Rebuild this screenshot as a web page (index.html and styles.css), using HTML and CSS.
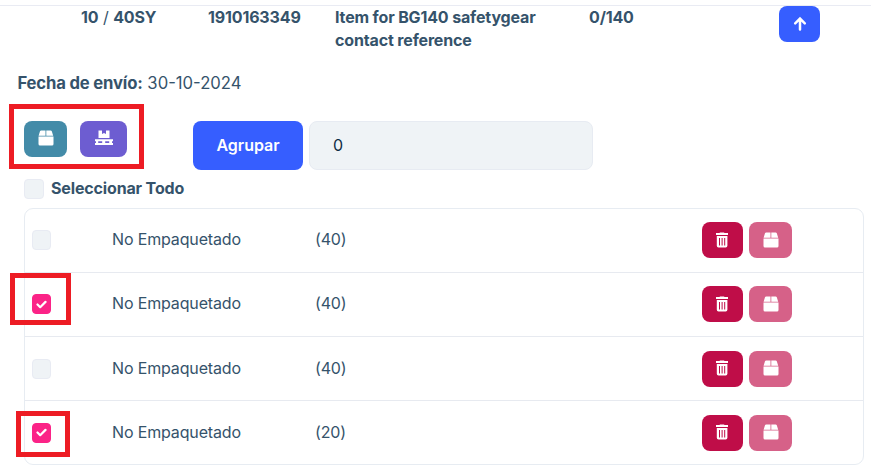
FILE: index.html
```html
<!DOCTYPE html>
<html lang="es">
<head>
<meta charset="utf-8">
<title>Empaquetado</title>
<link rel="stylesheet" href="styles.css">
</head>
<body>
<svg class="defs" width="0" height="0" aria-hidden="true">
  <symbol id="box" viewBox="0 0 16 16"><path d="M3.2.5h4.300v5.200H.6L2 1.300Q2.300.5 3.200.5ZM8.300.5h4.300q.9 0 1.200.8l1.400 4.400H8.300ZM.5 6.500h15v7.500q0 1.500-1.500 1.500H2Q.5 15.500.5 14Z"/></symbol>
  <symbol id="pallet" viewBox="0 0 20 16"><path d="M4.500.5H8v3.500l2-1 2 1V.5h3.500v7.500h-11ZM1 9.300h18v2h-1v1.700h1v2H1v-2h1v-1.700H1Zm3.200 2v1.700h4v-1.700Zm7 0v1.700h4v-1.700Z" fill-rule="evenodd"/></symbol>
  <symbol id="trash" viewBox="0 0 14 16"><path d="M4.500 1 5 .4h4l.5.6H13v2H1V1ZM1.800 4h10.600v9.800q0 1.700-1.700 1.700H3.500q-1.700 0-1.700-1.700ZM4 6v7.500h1V6Zm2.600 0v7.500h1V6Zm2.600 0v7.500h1V6Z" fill-rule="evenodd"/></symbol>
</svg>
<div class="page">
  <header class="item">
    <div><b>10</b> / <b>40SY</b></div>
    <b>1910163349</b>
    <b>Item for BG140 safetygear contact reference</b>
    <b>0/140</b>
    <button class="btn up" aria-label="Subir"><svg width="14" height="15" viewBox="0 0 14 15"><path d="M7 13.500V3M2.200 7.300 7 2.500l4.800 4.800" fill="none" stroke="#fff" stroke-width="2.500" stroke-linecap="round"/></svg></button>
  </header>
  <p class="date"><b>Fecha de envío:</b> 30-10-2024</p>
  <div class="toolbar">
    <div class="pack">
      <button class="btn teal" aria-label="Caja"><svg width="16" height="16"><use href="#box"/></svg></button>
      <button class="btn purple" aria-label="Palet"><svg width="20" height="16"><use href="#pallet"/></svg></button>
      <span class="mark mark-pack"></span>
    </div>
    <button class="btn group">Agrupar</button>
    <input class="qty" value="0" aria-label="Cantidad">
  </div>
  <label class="all"><span class="check large"></span><b>Seleccionar Todo</b></label>
  <div class="list">
    <div class="row upper">
      <div><span class="check"></span></div><span>No Empaquetado</span><span>(40)</span>
      <div class="actions"><button class="btn red" aria-label="Eliminar"><svg width="14" height="16"><use href="#trash"/></svg></button><button class="btn pink" aria-label="Caja"><svg width="16" height="16"><use href="#box"/></svg></button></div>
    </div>
    <div class="row upper">
      <div><span class="check on"><svg width="11" height="9" viewBox="0 0 11 9"><path d="m1.500 4.500 2.700 2.700L9.500 1.900"/></svg></span><span class="mark mark-a"></span></div><span>No Empaquetado</span><span>(40)</span>
      <div class="actions"><button class="btn red" aria-label="Eliminar"><svg width="14" height="16"><use href="#trash"/></svg></button><button class="btn pink" aria-label="Caja"><svg width="16" height="16"><use href="#box"/></svg></button></div>
    </div>
    <div class="row">
      <div><span class="check"></span></div><span>No Empaquetado</span><span>(40)</span>
      <div class="actions"><button class="btn red" aria-label="Eliminar"><svg width="14" height="16"><use href="#trash"/></svg></button><button class="btn pink" aria-label="Caja"><svg width="16" height="16"><use href="#box"/></svg></button></div>
    </div>
    <div class="row">
      <div><span class="check on"><svg width="11" height="9" viewBox="0 0 11 9"><path d="m1.500 4.500 2.700 2.700L9.500 1.900"/></svg></span><span class="mark mark-b"></span></div><span>No Empaquetado</span><span>(20)</span>
      <div class="actions"><button class="btn red" aria-label="Eliminar"><svg width="14" height="16"><use href="#trash"/></svg></button><button class="btn pink" aria-label="Caja"><svg width="16" height="16"><use href="#box"/></svg></button></div>
    </div>
  </div>
</div>
</body>
</html>
```
FILE: styles.css
```css
* { box-sizing: border-box; }
body {
  margin: 0;
  background: #fff;
  color: #35536b;
  font: 16px/23px Inter, sans-serif;
  overflow: hidden;
}
b { font-weight: 650; letter-spacing: -.15px; }
.defs { display: block; }
.page { padding-top: 5px; }
.item {
  display: grid;
  grid-template-columns: 127px 127px 254px 190px 41px;
  align-items: start;
  height: 67px;
  padding-left: 81px;
  border-top: 1px solid #e9ebf3;
}
.item > b:nth-child(3) { padding-right: 40px; }
.date { margin: 0 0 26px; padding-left: 17.4px; font-size: 16.65px; }
.btn {
  display: inline-flex;
  align-items: center;
  justify-content: center;
  height: 36px;
  padding: 0;
  border: 0;
  border-radius: 8px;
  color: #fff;
  fill: #fff;
  font: 600 16px/23px Inter, sans-serif;
}
.btn svg { margin: 0 1px 1px 0; }
.up { width: 41px; background: #365eff; }
.btn.up svg { margin: 0 0 1px; }
.teal { width: 43px; background: #438ba8; }
.btn.teal svg { margin: 0 0 2px; }
.purple { width: 47px; background: #6d5dd1; }
.btn.purple svg { margin: 0 0 2px; }
.red { width: 41px; background: #bf0d48; }
.pink { width: 43px; background: #d66188; }
.btn.pink svg { margin: 0 0 1px; }
.toolbar { display: flex; align-items: flex-start; padding-left: 24px; }
.pack { position: relative; display: flex; gap: 13px; width: 169px; }
.group { width: 110px; height: 49px; margin-right: 6px; background: #365eff; }
.qty {
  width: 284px;
  height: 49px;
  padding: 0 23px 1px;
  border: 1px solid #e7ebf2;
  border-radius: 8px;
  background: #eff3f6;
  color: #0f2e45;
  font: 16px/23px Inter, sans-serif;
}
.all { display: flex; align-items: center; gap: 7px; width: fit-content; margin: 7px 0 8px 24px; }
.check {
  display: flex;
  align-items: center;
  justify-content: center;
  width: 19px;
  height: 20px;
  border: 1px solid #e8ebf3;
  border-radius: 4px;
  background: #eff3f6;
}
.large { width: 20px; height: 20px; }
.on { border-color: #fb2387; background: #fb2387; }
.on path { fill: none; stroke: #fff; stroke-width: 2.2; stroke-linecap: round; stroke-linejoin: round; }
.list { width: 840px; margin-left: 24px; border: 1px solid #e7ecf2; border-radius: 9px; letter-spacing: -.15px; }
.row {
  position: relative;
  display: grid;
  grid-template-columns: 80px 203px 387px 90px;
  align-items: center;
  height: 64px;
  padding-left: 7px;
}
.upper { padding-bottom: 1px; }
.upper > span { padding-bottom: 1px; }
.row:last-child { height: 63px; }
.row:not(:last-child) { border-bottom: 1px solid #e7eaf0; }
.actions { display: flex; gap: 6px; }
.mark { position: absolute; border: 5px solid #ed1c24; pointer-events: none; }
.mark-pack { left: -15px; top: -17px; width: 135px; height: 65px; }
.mark-a { left: -15px; top: 0; width: 61px; height: 52px; }
.mark-b { left: -9px; top: 10px; width: 54px; height: 46px; }
```
